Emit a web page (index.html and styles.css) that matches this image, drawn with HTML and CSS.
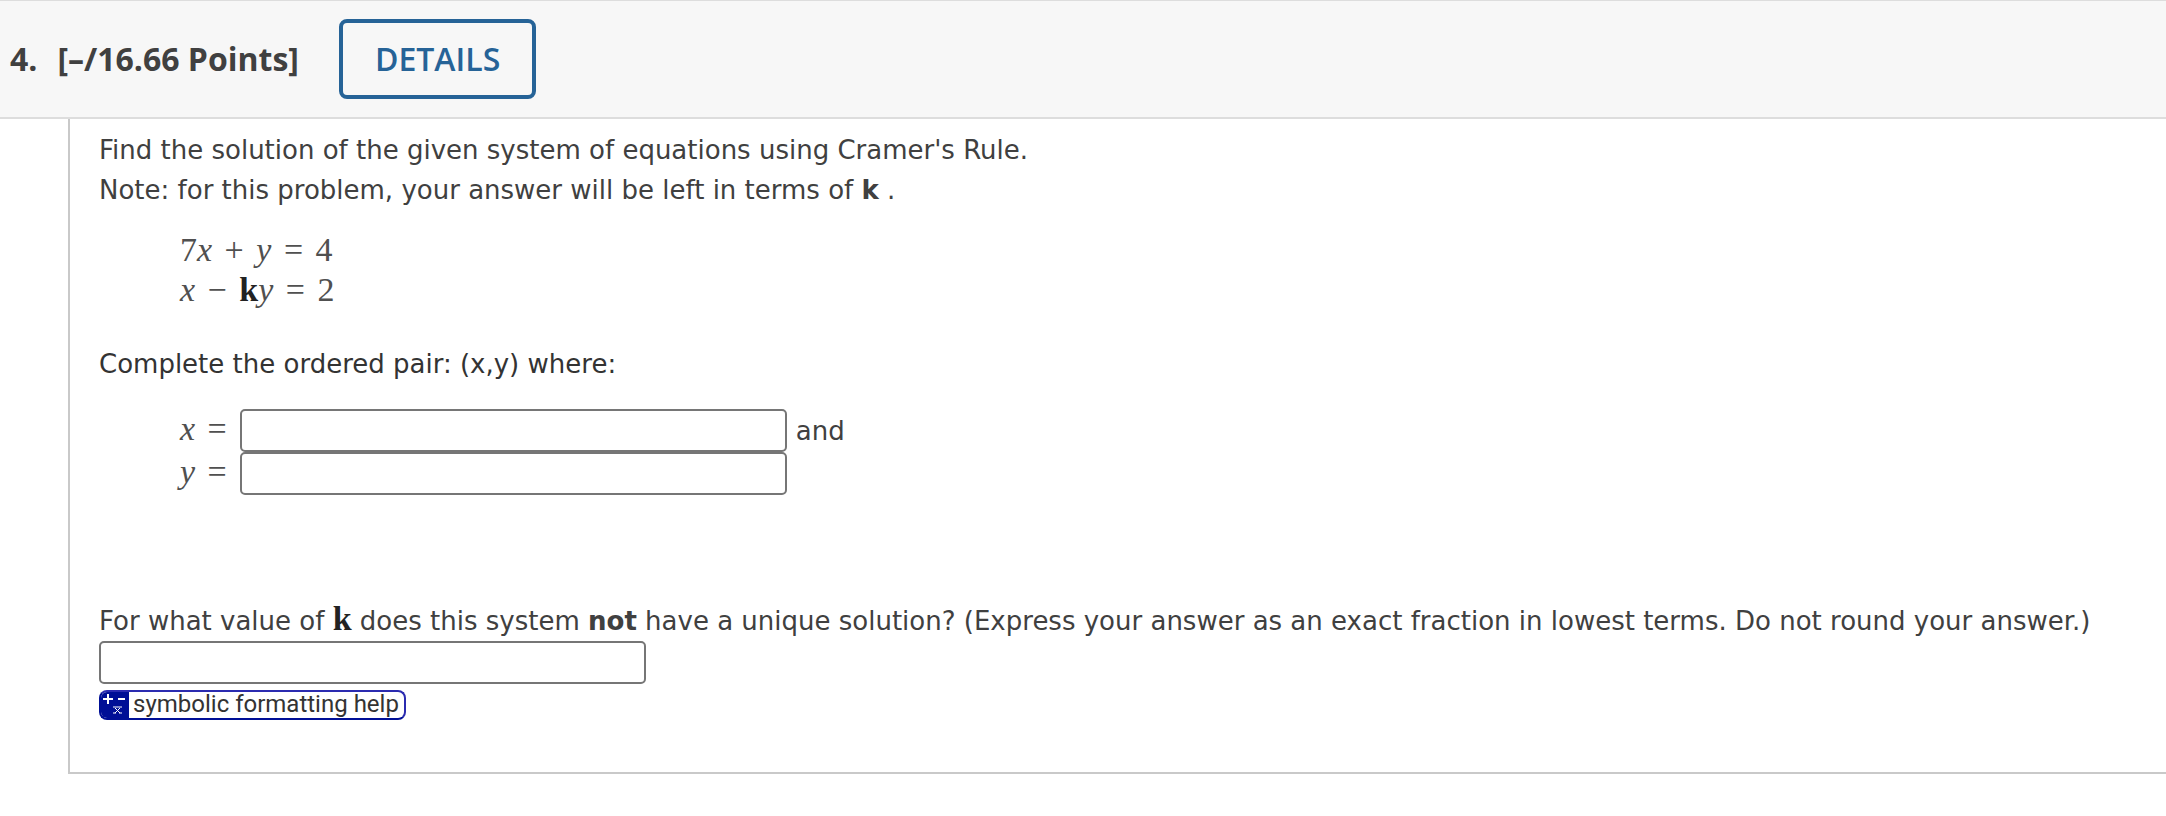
FILE: index.html
```html
<!DOCTYPE html>
<html lang="en">
<head>
    <meta charset="utf-8">
    <title>Question 4</title>
    <link rel="stylesheet" href="styles.css">
</head>
<body>
    <header class="question-header">
        <h2 class="question-title"><span>4.</span><span>[–/16.66 Points]</span></h2>
        <button type="button" class="details">DETAILS</button>
    </header>

    <main class="question">
        <p>Find the solution of the given system of equations using Cramer's Rule.<br>
        Note: for this problem, your answer will be left in terms of <b>k</b> .</p>

        <div class="equations">
            <div class="math">7<i>x</i> <span class="op">+</span> <i>y</i> <span class="op">=</span> 4</div>
            <div class="math"><i>x</i> <span class="op">−</span> <b>k</b><i>y</i> <span class="op">=</span> 2</div>
        </div>

        <p class="prompt">Complete the ordered pair: (x,y) where:</p>

        <div class="answers">
            <div class="answer">
                <label class="math" for="answer-x"><i>x</i> <span class="op">=</span></label>
                <input type="text" id="answer-x">
                <span>and</span>
            </div>
            <div class="answer">
                <label class="math" for="answer-y"><i>y</i> <span class="op">=</span></label>
                <input type="text" id="answer-y">
            </div>
        </div>

        <div class="last-part">
            <label for="answer-k">For what value of <b class="math-k">k</b> does this system <b>not</b> have a unique solution? (Express your answer as an exact fraction in lowest terms. Do not round your answer.)</label>
            <input type="text" id="answer-k">
            <a class="help" href="#">
                <svg class="help-icon" width="28" height="26" viewBox="0 0 28 26">
                    <path d="M2 7h10M7 2v10M17 7h7" />
                    <path d="M12 15h9M12 21h3M18 21h3M14 16l5 5M19 16l-5 5" class="thin" />
                </svg>
                <span>symbolic formatting help</span>
            </a>
        </div>
    </main>
</body>
</html>
```
FILE: styles.css
```css
* {
    box-sizing: border-box;
}

body {
    margin: 0;
    background-color: #fff;
    color: #404040;
    font-family: Verdana, "DejaVu Sans", sans-serif;
    font-size: 26px;
    line-height: 40px;
}

p {
    margin: 0;
}

.question-header {
    display: flex;
    align-items: center;
    gap: 40px;
    padding: 18px 10px;
    background-color: #f7f7f7;
    border-top: 1px solid #ddd;
    border-bottom: 2px solid #ddd;
}

.question-title {
    display: flex;
    gap: 20px;
    margin: 0;
    font-family: "Open Sans", sans-serif;
    font-size: 32px;
    font-weight: 700;
}

.details {
    height: 80px;
    padding: 0 32px 2px;
    border: 4px solid #266397;
    border-radius: 8px;
    background-color: transparent;
    color: #266397;
    font-family: "Open Sans", sans-serif;
    font-size: 32px;
    font-weight: 600;
    cursor: pointer;
}

.question {
    margin-left: 68px;
    padding: 11px 0 43px 29px;
    border-left: 2px solid #c9c9c9;
    border-bottom: 2px solid #c9c9c9;
}

.math {
    color: #505050;
    font-family: "Liberation Serif", serif;
    font-size: 34px;
}

.math .op {
    margin: 0 4px;
}

.math b,
.math-k {
    color: #222;
}

.equations {
    padding: 20px 0 34px 81px;
}

.prompt {
    color: #333;
}

.answers {
    padding: 25px 0 0 81px;
}

.answer {
    display: flex;
    align-items: center;
    gap: 9px;
}

.answer label {
    align-self: flex-start;
}

input {
    display: block;
    width: 547px;
    height: 43px;
    padding: 2px 6px;
    border: 2px solid #767676;
    border-radius: 5px;
    background-color: #fff;
    font: inherit;
}

.last-part {
    padding-top: 106px;
}

.last-part label {
    display: block;
}

.math-k {
    font-family: "Liberation Serif", serif;
    font-size: 34px;
    line-height: 1;
}

.help {
    display: inline-flex;
    height: 30px;
    margin-top: 6px;
    border: 2px solid #2b2bb0;
    border-left-color: #000f96;
    border-bottom-color: #000f96;
    border-radius: 8px;
    background-color: #fff;
    color: #333;
    font-family: Roboto, sans-serif;
    font-size: 24px;
    line-height: 25px;
    text-decoration: none;
    overflow: hidden;
}

.help span {
    padding: 0 5px 0 4px;
}

.help-icon {
    background-color: #000f96;
    fill: none;
    stroke: #fff;
    stroke-width: 2;
}

.help-icon .thin {
    stroke-width: 1;
}
```
